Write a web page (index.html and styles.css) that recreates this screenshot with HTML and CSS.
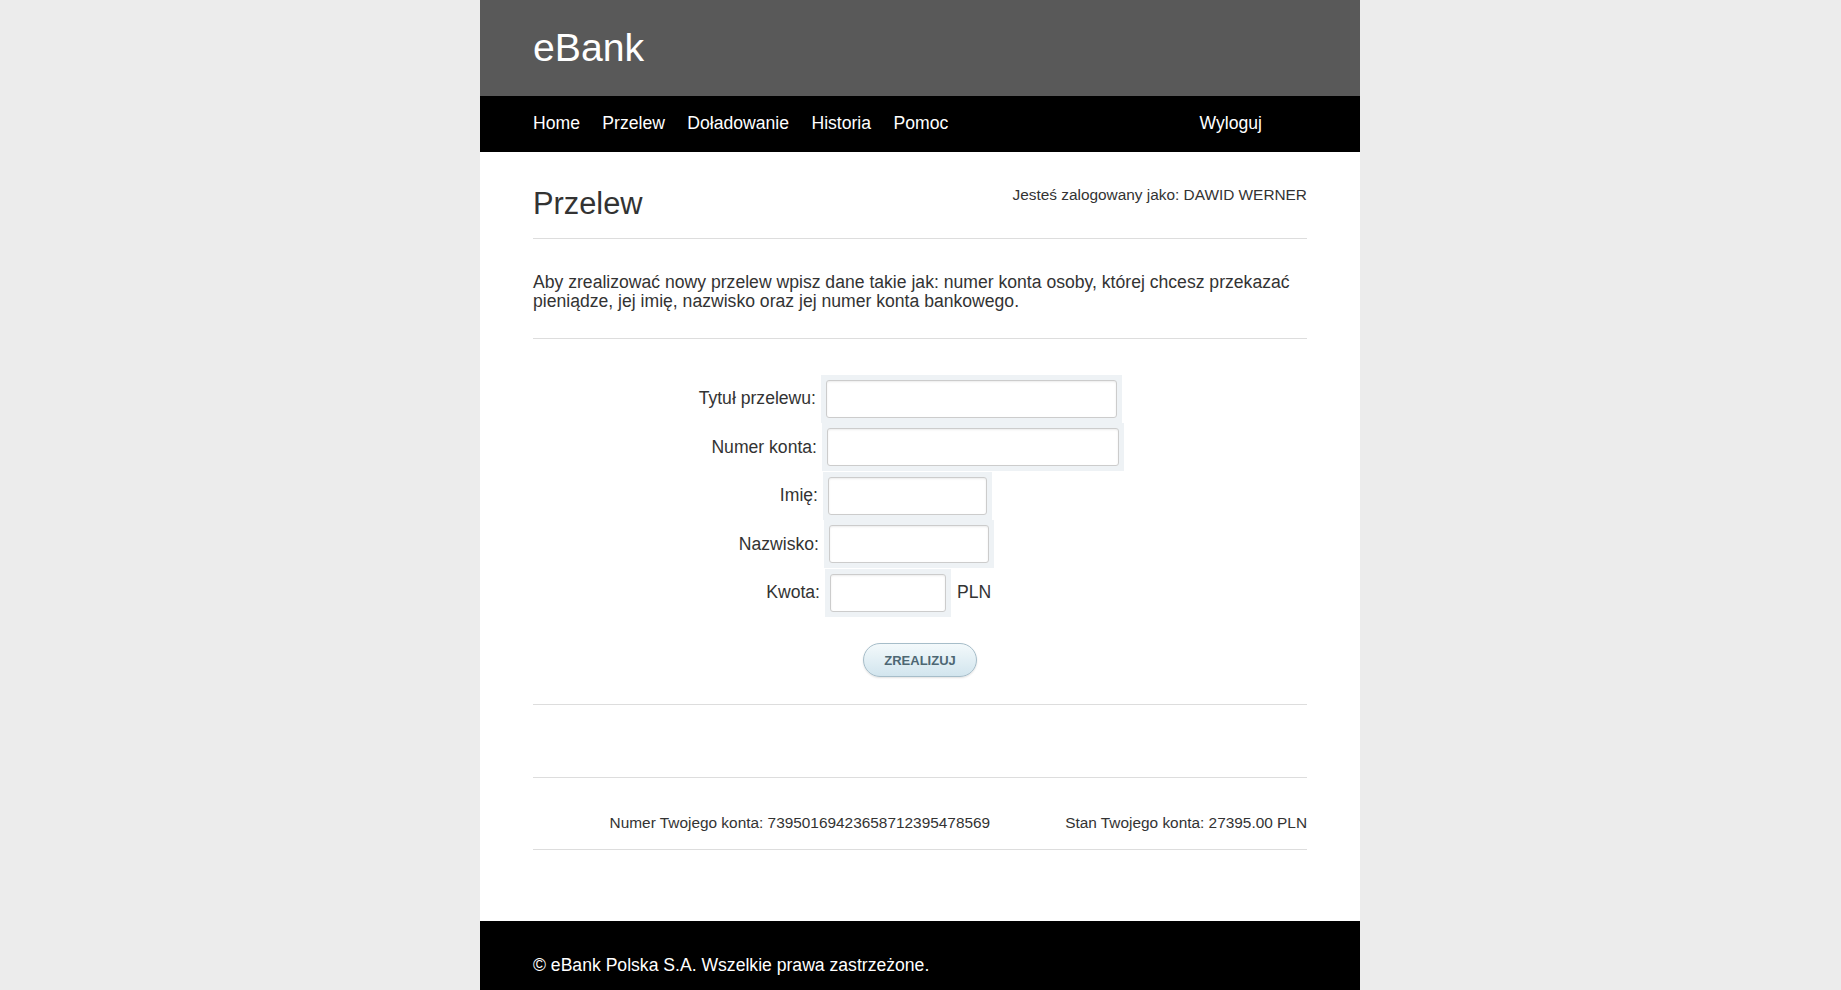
FILE: index.html
```html
<!DOCTYPE html>
<html lang="pl">
<head>
<meta charset="utf-8">
<title>eBank - Przelew</title>
<link rel="stylesheet" href="styles.css">
</head>
<body>
<div class="page">
  <header class="masthead">
    <div class="logo">eBank</div>
  </header>
  <nav class="menu">
    <ul class="menu-list">
      <li><a href="#">Home</a></li>
      <li><a href="#">Przelew</a></li>
      <li><a href="#">Doładowanie</a></li>
      <li><a href="#">Historia</a></li>
      <li><a href="#">Pomoc</a></li>
    </ul>
    <a class="logout" href="#">Wyloguj</a>
  </nav>
  <main class="content">
    <div class="title-row">
      <h1 class="title">Przelew</h1>
      <div class="user">Jesteś zalogowany jako: DAWID WERNER</div>
    </div>
    <div class="rule"></div>
    <p class="intro">Aby zrealizować nowy przelew wpisz dane takie jak: numer konta osoby, której chcesz przekazać pieniądze, jej imię, nazwisko oraz jej numer konta bankowego.</p>
    <div class="rule"></div>
    <form class="transfer">
      <div class="row row-1">
        <label class="label">Tytuł przelewu:</label>
        <span class="field"><input class="input w-long" type="text"></span>
      </div>
      <div class="row row-2">
        <label class="label">Numer konta:</label>
        <span class="field"><input class="input w-long2" type="text"></span>
      </div>
      <div class="row row-3">
        <label class="label">Imię:</label>
        <span class="field"><input class="input w-mid" type="text"></span>
      </div>
      <div class="row row-4">
        <label class="label">Nazwisko:</label>
        <span class="field"><input class="input w-mid2" type="text"></span>
      </div>
      <div class="row row-5">
        <label class="label">Kwota:</label>
        <span class="field"><input class="input w-short" type="text"></span>
        <span class="unit">PLN</span>
      </div>
      <div class="actions">
        <button class="btn" type="button">ZREALIZUJ</button>
      </div>
    </form>
    <div class="rule rule-after-form"></div>
    <div class="rule rule-account"></div>
    <div class="account">
      <span>Numer Twojego konta: 73950169423658712395478569</span>
      <span>Stan Twojego konta: 27395.00 PLN</span>
    </div>
    <div class="rule"></div>
  </main>
  <footer class="footer">© eBank Polska S.A. Wszelkie prawa zastrzeżone.</footer>
</div>
</body>
</html>
```

FILE: styles.css
```css
html, body {
  margin: 0;
  padding: 0;
}
body {
  background: #ececec;
  font-family: "Liberation Sans", Arial, sans-serif;
  color: #333;
  padding-right: 1px;
}
.page {
  width: 880px;
  margin: 0 auto;
  background: #fff;
}
.masthead {
  height: 96px;
  background: #595959;
  display: flex;
  align-items: center;
  padding: 0 53px;
}
.logo {
  color: #fff;
  font-size: 39.2px;
  line-height: 1;
}
.menu {
  height: 56px;
  background: #000;
  display: flex;
  align-items: center;
  justify-content: space-between;
  padding: 0 53px;
  font-size: 17.6px;
  line-height: 1;
}
.menu-list {
  list-style: none;
  margin: 0;
  padding: 0;
  display: flex;
  gap: 22.4px;
}
.menu a {
  color: #fff;
  text-decoration: none;
}
.logout {
  margin-right: 45px;
}
.content {
  padding: 0 53px;
}
.title-row {
  display: flex;
  justify-content: space-between;
  align-items: flex-start;
  padding: 34px 0 18px;
}
.title {
  margin: 1px 0 -1px;
  font-size: 30.8px;
  line-height: 34px;
  font-weight: normal;
  color: #333;
}
.user {
  font-size: 15.4px;
  line-height: 18px;
  color: #333;
}
.rule {
  height: 1px;
  background: #dddddd;
}
.intro {
  margin: 34px 0 26px;
  font-size: 17.6px;
  line-height: 19.4px;
  color: #333;
}
.transfer {
  margin: 36px 0 0;
  padding-left: 165px;
}
.row {
  display: flex;
  align-items: center;
  margin-bottom: 0.5px;
}
.row-2 { padding-left: 1px; }
.row-3 { padding-left: 2px; }
.row-4 { padding-left: 3px; }
.row-5 { padding-left: 4px; }
.label {
  width: 118px;
  margin-right: 5px;
  text-align: right;
  font-size: 17.6px;
  color: #333;
  white-space: nowrap;
}
.field {
  display: flex;
  padding: 5px;
  background: #eef2f5;
}
.input {
  box-sizing: border-box;
  height: 38px;
  margin: 0;
  border: 1px solid #cccccc;
  border-radius: 3px;
  background: #fff;
  box-shadow: inset 0 1px 2px rgba(0, 0, 0, 0.08);
  font: inherit;
  padding: 0 6px;
}
.w-long { width: 291px; }
.w-long2 { width: 292px; }
.w-mid { width: 159px; }
.w-mid2 { width: 160px; }
.w-short { width: 116px; }
.unit {
  margin-left: 6px;
  font-size: 17.6px;
  color: #333;
}
.actions {
  display: flex;
  justify-content: center;
  margin-left: -165px;
  padding: 26px 0 27px;
}
.btn {
  box-sizing: border-box;
  width: 114px;
  height: 34px;
  border: 1px solid #a6bdc9;
  border-radius: 17px;
  background: linear-gradient(#f3f9fb, #d2e5ee);
  box-shadow: 0 1px 2px rgba(0, 0, 0, 0.12);
  color: #4d6773;
  font-family: "Liberation Sans", Arial, sans-serif;
  font-weight: bold;
  font-size: 13px;
  padding: 0;
  cursor: pointer;
}
.rule-account {
  margin-top: 72px;
}
.account {
  display: flex;
  justify-content: flex-end;
  gap: 75px;
  margin: 36px 0 17px;
  font-size: 15.4px;
  line-height: 18px;
  color: #333;
}
.footer {
  margin-top: 71px;
  background: #000;
  color: #fff;
  padding: 34px 53px 40px;
  font-size: 17.6px;
  line-height: 20px;
}
```
